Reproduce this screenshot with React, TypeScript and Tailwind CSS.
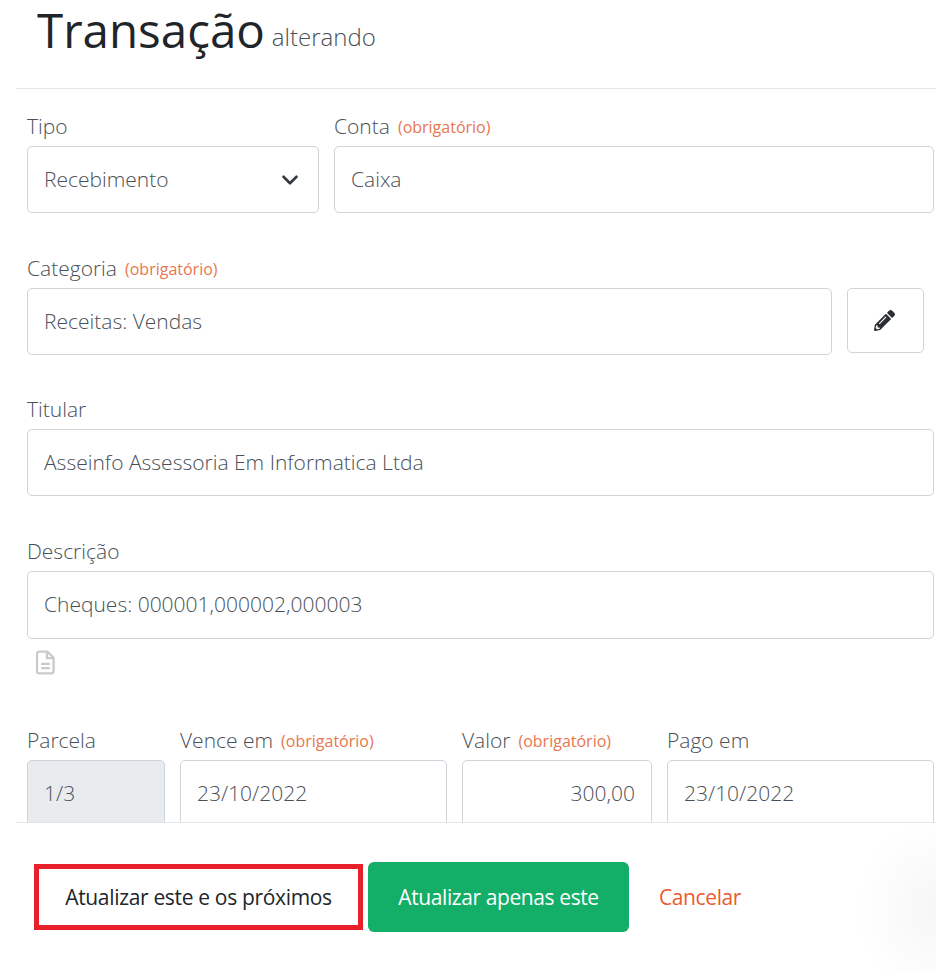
import { ChevronDown } from "lucide-react";

function Obrigatorio() {
  return <span className="relative top-[-1px] ml-2 text-[16px] font-normal text-[#e8764f]">(obrigatório)</span>;
}

function Field({ label, required, value, right, disabled, className }: {
  label: string;
  required?: boolean;
  value: string;
  right?: boolean;
  disabled?: boolean;
  className?: string;
}) {
  return (
    <div className={className}>
      <div className="h-[38px] pt-[2px] text-[21px] leading-[32px] text-[#495057]">
        {label}
        {required && <Obrigatorio />}
      </div>
      <div
        className={`flex h-[67px] items-center rounded-[5px] border border-[#ced4da] px-4 text-[21px] text-[#495057] ${
          right ? "justify-end" : ""
        } ${disabled ? "bg-[#e9ecef]" : "bg-white"}`}
      >
        {value}
      </div>
    </div>
  );
}

function App() {
  return (
    <div className="flex h-[971px] w-[936px] flex-col overflow-hidden bg-white font-['Open_Sans',sans-serif] font-light">
      <div className="h-[822px] overflow-hidden">
        <div className="ml-4 flex h-[89px] items-start border-b border-[#e3e5e7] pl-[21px]">
          <h1 className="text-[47.5px] leading-[60px] font-normal text-[#212529]">Transação</h1>
          <span className="mt-[20px] ml-[7px] text-[24px] leading-[33px] text-[#495057]">alterando</span>
        </div>

        <div className="pt-[19px] pl-[27px] pr-[2px]">
          <div className="flex gap-[15px]">
            <div className="w-[292px]">
              <div className="h-[38px] pt-[2px] text-[21px] leading-[32px] text-[#495057]">Tipo</div>
              <div className="flex h-[67px] items-center justify-between rounded-[5px] border border-[#ced4da] bg-white pr-[15px] pl-4 text-[21px] text-[#495057]">
                Recebimento
                <ChevronDown className="h-[26px] w-[26px] text-[#343a40]" strokeWidth={2.4} />
              </div>
            </div>
            <Field className="flex-1" label="Conta" required value="Caixa" />
          </div>

          <div className="mt-[37px] flex items-end gap-[15px]">
            <Field className="w-[805px]" label="Categoria" required value="Receitas: Vendas" />
            <div className="mb-[2px] flex h-[65px] w-[77px] items-center justify-center rounded-[5px] border border-[#ced4da] bg-white pr-[3px]">
              <svg viewBox="0 0 512 512" className="h-[21px] w-[21px] fill-[#2b2f33]">
                <path d="M497.9 142.1l-46.1 46.1c-4.7 4.7-12.3 4.7-17 0l-111-111c-4.7-4.7-4.7-12.3 0-17l46.1-46.1c18.7-18.7 49.1-18.7 67.9 0l60.1 60.1c18.8 18.7 18.8 49.1 0 67.9zM284.2 99.8L21.6 362.4.4 483.9c-2.9 16.4 11.4 30.6 27.8 27.8l121.5-21.3 262.6-262.6c4.7-4.7 4.7-12.3 0-17l-111-111c-4.8-4.7-12.4-4.7-17.1 0zM124.1 339.9c-5.5-5.5-5.5-14.3 0-19.8l154-154c5.5-5.5 14.3-5.5 19.8 0s5.5 14.3 0 19.8l-154 154c-5.5 5.5-14.3 5.5-19.8 0zM88 424h48v36.3l-64.5 11.3-31.1-31.1L51.7 376H88v48z" />
              </svg>
            </div>
          </div>

          <Field className="mt-[36px]" label="Titular" value="Asseinfo Assessoria Em Informatica Ltda" />
          <Field className="mt-[37px] [&>div:last-child]:h-[68px]" label="Descrição" value="Cheques: 000001,000002,000003" />

          <svg viewBox="0 0 20 26" className="mt-[11px] ml-[9px] h-[25px] w-[19px] fill-none stroke-[#c8cbce]" strokeWidth="2.4">
            <path d="M3.5 1.5h8.5l6.5 6.5v14a2.5 2.5 0 0 1-2.5 2.5H3.5A2.5 2.5 0 0 1 1 22V4a2.5 2.5 0 0 1 2.5-2.5z" />
            <path d="M11.5 1.5V8.5H18.5" />
            <path d="M5.5 14.5h9M5.5 19h9" />
          </svg>

          <div className="mt-[47px] flex gap-[15px]">
            <Field className="w-[138px]" label="Parcela" value="1/3" disabled />
            <Field className="w-[267px]" label="Vence em" required value="23/10/2022" />
            <Field className="w-[190px]" label="Valor" required value="300,00" right />
            <Field className="w-[267px]" label="Pago em" value="23/10/2022" />
          </div>
        </div>
      </div>

      <div className="relative ml-4 flex-1 border-t border-[#e3e5e7]">
        <div className="pointer-events-none absolute top-0 right-0 bottom-0 w-[90px] bg-[radial-gradient(ellipse_80px_90px_at_100%_58%,#f6f6f6,#ffffff)]" />
        <div className="relative flex items-center pt-[39px] pl-[18px]">
          <button className="flex h-[66px] w-[329px] items-center justify-center border-[5px] border-[#e8202a] bg-white pt-[1px] text-[21px] font-normal tracking-[-0.33px] text-[#212529]">
            Atualizar este e os próximos
          </button>
          <button className="ml-[5px] h-[70px] w-[261px] rounded-[6px] bg-[#13ae67] pt-[1px] text-[21px] font-normal tracking-[-0.4px] text-white">
            Atualizar apenas este
          </button>
          <span className="ml-[30px] pt-[1px] text-[21px] font-normal tracking-[-0.4px] text-[#ea5a30]">Cancelar</span>
        </div>
      </div>
    </div>
  );
}

export default App;
